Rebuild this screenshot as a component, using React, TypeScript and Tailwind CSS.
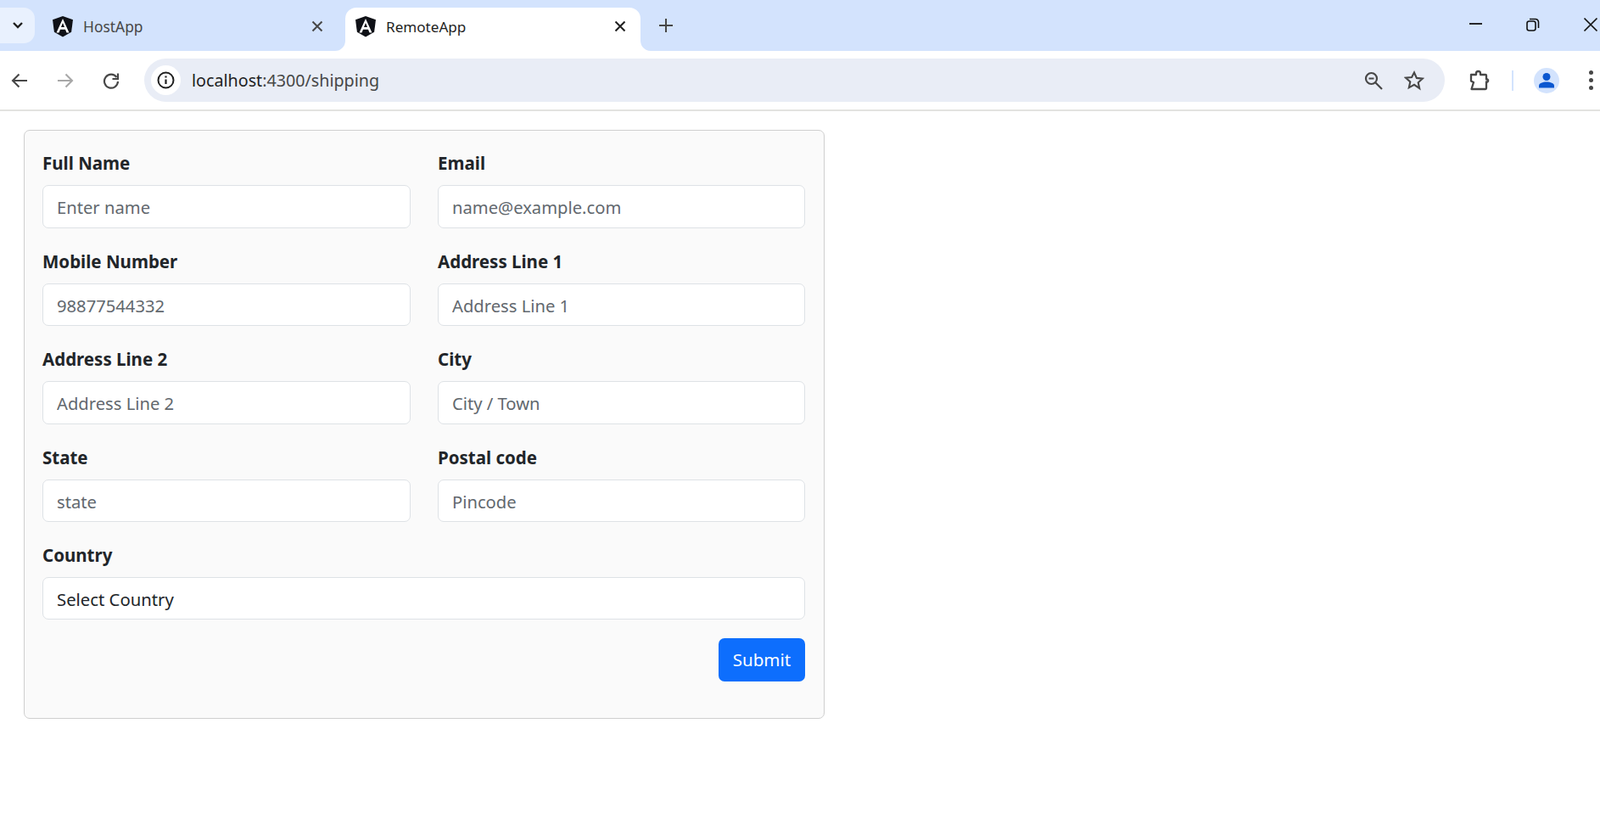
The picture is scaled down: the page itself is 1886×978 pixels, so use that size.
import React from 'react';

const font = "font-['Noto_Sans','Open_Sans',sans-serif]";

const AngularLogo = () => (
  <svg width="26" height="26" viewBox="0 0 26 26" className="shrink-0">
    <path d="M13 1 1 5.200l1.900 14.600L13 25.500l10.100-5.700L25 5.200z" fill="#0f1117" />
    <path d="M13 4 5.500 20.500h3l1.500-3.800h6l1.500 3.800h3L13 4zm2 10h-4l2-5z" fill="#fff" />
  </svg>
);

const CloseIcon = ({ color }: { color: string }) => (
  <svg width="14" height="14" viewBox="0 0 14 14" fill="none" stroke={color} strokeWidth="2">
    <path d="M1.500 1.500l11 11M12.500 1.500l-11 11" />
  </svg>
);

const TabCorner = ({ side }: { side: 'left' | 'right' }) => (
  <svg
    width="12"
    height="12"
    viewBox="0 0 12 12"
    className={side === 'left' ? 'absolute bottom-0 -left-3' : 'absolute bottom-0 -right-3'}
  >
    <path d={side === 'left' ? 'M12 0v12H0A12 12 0 0 0 12 0z' : 'M0 0v12h12A12 12 0 0 1 0 0z'} fill="#fff" />
  </svg>
);

const TitleBar = () => (
  <div className={`flex h-[60px] items-end bg-[#d3e3fd] ${font}`}>
    <div className="mb-[9px] flex h-[42px] w-[41px] items-center justify-center self-end rounded-r-[13px] bg-[#e9f1fe]">
      <svg width="14" height="10" viewBox="0 0 14 10" fill="none" stroke="#1f1f1f" strokeWidth="2.400">
        <path d="M2 2l5 5 5-5" />
      </svg>
    </div>
    <div className="flex h-[51px] w-[366px] items-start pl-[20px] pr-[26px] pt-[9px]">
      <AngularLogo />
      <span className="ml-[11px] flex-1 text-[17.400px] leading-[27px] text-[#474747]">HostApp</span>
      <div className="mt-[6px]">
        <CloseIcon color="#474747" />
      </div>
    </div>
    <div className="relative flex h-[51px] w-[348px] items-start rounded-t-[13px] bg-white pl-[11px] pr-[17px] pt-[9px]">
      <TabCorner side="left" />
      <AngularLogo />
      <span className="ml-[11px] flex-1 text-[17.100px] leading-[27px] text-[#1f1f1f]">RemoteApp</span>
      <div className="mt-[6px]">
        <CloseIcon color="#1f1f1f" />
      </div>
      <TabCorner side="right" />
    </div>
    <div className="mb-[20px] ml-[20px] flex h-[20px] w-[20px] items-center justify-center">
      <svg width="16" height="16" viewBox="0 0 16 16" stroke="#474747" strokeWidth="2">
        <path d="M8 0v16M0 8h16" />
      </svg>
    </div>
    <div className="flex-1" />
    <div className="mb-[22px] flex items-center">
      <svg width="16" height="16" viewBox="0 0 16 16" stroke="#111" strokeWidth="1.800">
        <path d="M0 7h15" />
      </svg>
      <svg width="16" height="16" viewBox="0 0 16 16" fill="none" stroke="#111" strokeWidth="1.600" className="ml-[51px]">
        <rect x="1" y="4" width="10" height="11" rx="2.500" />
        <path d="M4 1.500h6.500A3.500 3.500 0 0 1 14.500 5v7" />
      </svg>
      <svg width="18" height="18" viewBox="0 0 18 18" stroke="#111" strokeWidth="1.700" className="ml-[51px] mr-[2px]">
        <path d="M1.500 1.500l15 15M16.500 1.500l-15 15" />
      </svg>
    </div>
  </div>
);

const Toolbar = () => (
  <div className={`flex h-[71px] items-start border-b-2 border-[#e3e3e0] bg-white pt-[9px] ${font}`}>
    <div className="flex h-[51px] w-[170px] items-center">
      <svg width="20" height="20" viewBox="0 0 20 20" fill="none" stroke="#474747" strokeWidth="2.100" className="ml-[13px]">
        <path d="M19 10H2M9.500 2.500 2 10l7.500 7.500" />
      </svg>
      <svg width="20" height="20" viewBox="0 0 20 20" fill="none" stroke="#a8a8a8" strokeWidth="2.100" className="ml-[34px]">
        <path d="M1 10h17M10.500 2.500 18 10l-7.500 7.500" />
      </svg>
      <svg width="20" height="20" viewBox="0 0 20 20" fill="none" stroke="#474747" strokeWidth="2.200" className="ml-[34px]">
        <path d="M16.500 6A8 8 0 1 0 18 11" />
        <path d="M18 1.500V8h-6.500" />
      </svg>
    </div>
    <div className="flex h-[51px] w-[1533px] items-center rounded-full bg-[#e9edf6] pl-[8px] pr-[24px]">
      <div className="flex h-[35px] w-[35px] items-center justify-center rounded-full bg-white">
        <svg width="21" height="21" viewBox="0 0 21 21" fill="none">
          <circle cx="10.500" cy="10.500" r="9" stroke="#1f1f1f" strokeWidth="2" />
          <path d="M10.500 9.500v5.500M10.500 5.500v2" stroke="#1f1f1f" strokeWidth="2.200" />
        </svg>
      </div>
      <span className="ml-[13px] flex-1 text-[19.700px] leading-[51px] text-[#474747]">
        <span className="text-[#1f1f1f]">localhost</span>:4300/shipping
      </span>
      <svg width="22" height="22" viewBox="0 0 22 22" fill="none" stroke="#474747" strokeWidth="2.200" className="mr-[1px]">
        <circle cx="8.500" cy="8.500" r="6.500" />
        <path d="M13.500 13.500 21 21M5.500 8.500h6" />
      </svg>
      <svg width="24" height="24" viewBox="0 0 24 24" fill="none" stroke="#474747" strokeWidth="2.100" className="ml-[24px]">
        <path d="M12 2.500l2.900 6.400 7 .7-5.200 4.700 1.500 6.900L12 16.800l-6.200 3.500 1.500-6.900-5.200-4.700 7-.7z" />
      </svg>
    </div>
    <div className="flex h-[51px] flex-1 items-center">
      <svg width="26" height="26" viewBox="0 0 26 26" fill="none" stroke="#474747" strokeWidth="2.300" className="ml-[28px]">
        <path d="M3 6h6V4.500a2.500 2.500 0 0 1 5 0V6h6a1 1 0 0 1 1 1v4.500h1.500a2 2 0 0 1 0 3H21V22a1 1 0 0 1-1 1H3.500l2.500-8-3-1.500z" strokeLinejoin="round" />
      </svg>
      <div className="ml-[25px] h-[24px] w-[2px] bg-[#d3e3fd]" />
      <div className="ml-[24px] flex h-[30px] w-[30px] items-center justify-center rounded-full bg-[#d3e3fd]">
        <svg width="20" height="20" viewBox="0 0 20 20" fill="#0b57d0">
          <circle cx="10" cy="5.500" r="4.500" />
          <path d="M1 18.500V16c0-3 4.500-4.500 9-4.500s9 1.500 9 4.500v2.500z" />
        </svg>
      </div>
      <div className="ml-[35px] flex flex-col gap-[4px]">
        <div className="h-[5px] w-[5px] rounded-full bg-[#474747]" />
        <div className="h-[5px] w-[5px] rounded-full bg-[#474747]" />
        <div className="h-[5px] w-[5px] rounded-full bg-[#474747]" />
      </div>
    </div>
  </div>
);

const fields = [
  { label: 'Full Name', placeholder: 'Enter name' },
  { label: 'Email', placeholder: 'name@example.com' },
  { label: 'Mobile Number', placeholder: '98877544332' },
  { label: 'Address Line 1', placeholder: 'Address Line 1' },
  { label: 'Address Line 2', placeholder: 'Address Line 2' },
  { label: 'City', placeholder: 'City / Town' },
  { label: 'State', placeholder: 'state' },
  { label: 'Postal code', placeholder: 'Pincode' },
];

const Label = ({ children }: { children: React.ReactNode }) => (
  <label className="mb-[12px] block text-[20.500px] font-bold leading-[28px] text-[#212529]">{children}</label>
);

const ShippingForm = () => (
  <form className={`ml-[28px] mt-[22px] w-[944px] rounded-[7px] border border-[#cfcfcf] bg-[#fafafa] pb-[43px] pl-[21px] pr-[22px] pt-[24px] ${font}`}>
    <div className="grid grid-cols-[434px_433px] gap-x-[32px] gap-y-[25px]">
      {fields.map((field) => (
        <div key={field.label}>
          <Label>{field.label}</Label>
          <input
            placeholder={field.placeholder}
            className="block h-[50.500px] w-full rounded-[7px] border border-[#dee2e6] bg-white px-[16px] pt-[2px] text-[20.200px] text-[#212529] outline-none placeholder:text-[#62686e]"
          />
        </div>
      ))}
      <div className="col-span-2">
        <Label>Country</Label>
        <select className="block h-[50px] w-full appearance-none rounded-[7px] border border-[#dee2e6] bg-white px-[16px] pt-[2px] text-[20.300px] text-[#212529] outline-none">
          <option>Select Country</option>
        </select>
      </div>
    </div>
    <div className="mt-[22px] flex justify-end">
      <button type="button" className="h-[51px] w-[102px] rounded-[7px] bg-[#0d6efd] text-[20.500px] text-white">
        Submit
      </button>
    </div>
  </form>
);

export default function App() {
  return (
    <div className="min-h-screen overflow-hidden bg-white">
      <TitleBar />
      <Toolbar />
      <ShippingForm />
    </div>
  );
}
